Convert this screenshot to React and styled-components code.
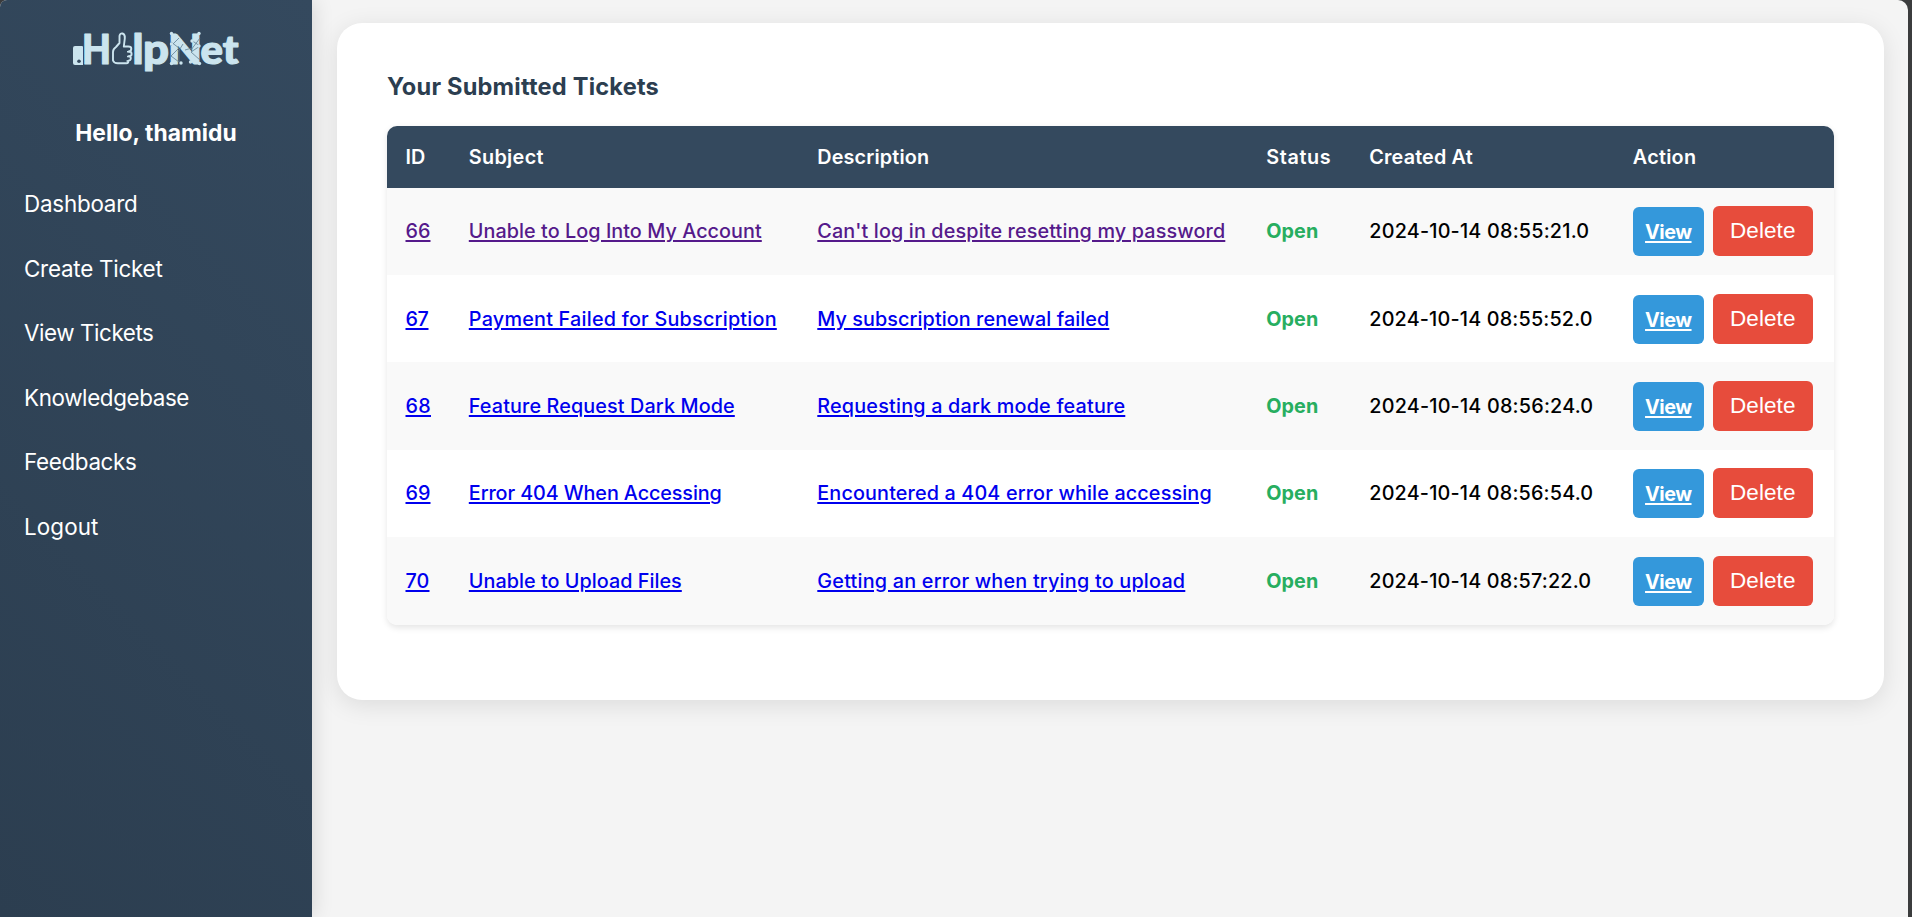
import React, { useLayoutEffect, useRef, useState } from "react";
import styled, { createGlobalStyle, css } from "styled-components";

const Global = createGlobalStyle`
  * { box-sizing: border-box; }
  html, body { margin: 0; padding: 0; background: #3b3c3d; }
  body { font-family: Inter, "Liberation Sans", sans-serif; overflow: hidden; }
`;

const Page = styled.div`
  display: flex;
  width: 1908px;
  height: 917px;
  background: #f4f4f4;
  border-radius: 7px 10px 0 0;
  overflow: hidden;
`;

const Sidebar = styled.aside`
  position: relative;
  z-index: 1;
  flex: 0 0 312px;
  display: flex;
  flex-direction: column;
  background: linear-gradient(225deg, #34495e, #2c3e50);
  box-shadow: 2px 0 19px rgba(0, 0, 0, 0.12);
  color: #fff;
`;

const Logo = styled.svg`
  display: block;
  margin: 10px 0 0 68px;
`;

const Greeting = styled.h2`
  margin: 25px 0 0;
  height: 36px;
  line-height: 36px;
  text-align: center;
  font-size: 22.8px;
  font-weight: 750;
`;

const Nav = styled.nav`
  display: flex;
  flex-direction: column;
  margin-top: 21px;
`;

const NavLink = styled.a`
  height: 64.6px;
  line-height: 64.6px;
  padding-left: 24px;
  font-size: 22.4px;
  color: #fff;
`;

const Main = styled.main`
  flex: 1;
  padding: 23px 24px 0 25px;
`;

const Card = styled.section`
  height: 677px;
  padding: 48px 50px 0;
  background: #fff;
  border-radius: 25px;
  box-shadow: 0 5px 25px rgba(0, 0, 0, 0.1);
`;

const Title = styled.h1`
  margin: 0 0 22.6px;
  height: 32px;
  line-height: 32px;
  font-size: 23.6px;
  font-weight: 650;
  color: #2c3e50;
`;

const Table = styled.div`
  border-radius: 10px;
  overflow: hidden;
  box-shadow: 0 2.5px 6px rgba(0, 0, 0, 0.1);
`;

const columns = css`
  display: grid;
  grid-template-columns: 63.3px 348.5px 449px 103px 263.5px 1fr;
  align-items: center;
`;

const HeadRow = styled.div`
  ${columns}
  height: 62px;
  background: #34495e;
  color: #fff;
  font-size: 19.8px;
  font-weight: 600;
`;

const Row = styled.div`
  ${columns}
  height: 87.4px;
  background: #fff;
  font-size: 19.8px;
  font-weight: 500;
  color: #000;
  &:nth-child(even) { background: #f9f9f9; }
`;

const Cell = styled.div`
  padding-left: 18.5px;
  white-space: nowrap;
`;

const TicketLink = styled.a`
  color: ${(p) => (p.$visited ? "#551a8b" : "#0000ee")};
  text-decoration: underline;
  text-decoration-thickness: 2px;
  text-underline-offset: 2px;
`;

const Status = styled.span`
  color: #27ae60;
  font-weight: 700;
`;

const Actions = styled(Cell)`
  display: flex;
  align-items: flex-end;
  gap: 9px;
`;

const ViewButton = styled.a`
  width: 71px;
  height: 49px;
  line-height: 50px;
  text-align: center;
  border-radius: 6px;
  background: #3498db;
  color: #fff;
  font-weight: 650;
  text-decoration: underline;
  text-decoration-thickness: 2px;
  text-underline-offset: 2px;
`;

const DeleteButton = styled.button`
  width: 100px;
  height: 50px;
  padding: 0;
  border: 0;
  border-radius: 6px;
  background: #e74c3c;
  color: #fff;
  font: 22.5px "Liberation Sans", Arial, sans-serif;
`;

const Fitted = styled.span`
  display: inline-block;
  white-space: nowrap;
  text-decoration: inherit;
`;

/* Tracks its text out or in so that it spans the given width. */
function Fit({ w, children }) {
  const ref = useRef(null);
  const [spacing, setSpacing] = useState(0);
  useLayoutEffect(() => {
    const natural = ref.current.getBoundingClientRect().width;
    setSpacing((w - natural) / children.length);
  }, [w, children]);
  return (
    <Fitted ref={ref} style={{ letterSpacing: spacing }}>
      {children}
    </Fitted>
  );
}

const nav = [
  ["Dashboard", 113.5],
  ["Create Ticket", 138.5],
  ["View Tickets", 129.5],
  ["Knowledgebase", 165],
  ["Feedbacks", 112.5],
  ["Logout", 74.5],
];

const heads = [
  ["ID", 20],
  ["Subject", 75],
  ["Description", 112],
  ["Status", 65],
  ["Created At", 103.5],
  ["Action", 63.5],
];

const tickets = [
  { id: ["66", 25], subject: ["Unable to Log Into My Account", 293], text: ["Can't log in despite resetting my password", 408], at: ["2024-10-14 08:55:21.0", 220], visited: true },
  { id: ["67", 23], subject: ["Payment Failed for Subscription", 308], text: ["My subscription renewal failed", 292], at: ["2024-10-14 08:55:52.0", 223.5] },
  { id: ["68", 25.5], subject: ["Feature Request Dark Mode", 266], text: ["Requesting a dark mode feature", 308], at: ["2024-10-14 08:56:24.0", 224] },
  { id: ["69", 25], subject: ["Error 404 When Accessing", 253], text: ["Encountered a 404 error while accessing", 394.5], at: ["2024-10-14 08:56:54.0", 224] },
  { id: ["70", 24], subject: ["Unable to Upload Files", 213], text: ["Getting an error when trying to upload", 368], at: ["2024-10-14 08:57:22.0", 222] },
];

const meshNodes = [[171.500, 33.500], [199, 33.500], [171.500, 44], [171.500, 63.500], [181, 63], [180.500, 41], [199.500, 63.500], [190.500, 62], [199, 46], [192, 41]];

function HelpNetLogo() {
  return (
    <Logo width="180" height="80" viewBox="68 10 180 80" fill="#cbe4ee">
      <path d="M75 46h7q1 0 1 1v18h-8q-2 0-2-2V48q0-2 2-2z" />
      <circle cx="79" cy="61.3" r="1.8" fill="#34495e" />
      <g fontFamily="Lato, sans-serif" fontWeight="900" stroke="#cbe4ee" strokeWidth="1.2" strokeLinejoin="round">
        <text x="82" y="64" fontSize="41" textLength="29" lengthAdjust="spacingAndGlyphs">H</text>
        <text x="132.5" y="64" fontSize="41" textLength="11" lengthAdjust="spacingAndGlyphs">l</text>
        <text x="143" y="64" fontSize="41" textLength="26" lengthAdjust="spacingAndGlyphs">p</text>
        <text x="168" y="64" fontSize="41" textLength="34" lengthAdjust="spacingAndGlyphs">N</text>
        <text x="200.5" y="64" fontSize="40" textLength="38" lengthAdjust="spacingAndGlyphs">et</text>
      </g>
      <path
        d="M113 60.500V52q0-3 3-5l3.500-4V36q.5-3 3-2.500q2.800 1 2.300 5l-1 8h4.500q3 0 3 2.300t-2.500 2.700q2.800 0 2.800 2.400t-2.800 2.400q2.200 0 2 2.200t-2.500 2.200q.5 2.500-2 2.600h-8.500q-3.800 0-4.800-2.800z"
        fill="none" stroke="#cbe4ee" strokeWidth="1.900" strokeLinejoin="round"
      />
      <path d="M127 51.800h3M127 56.600h3M126.500 60.900h2.500" stroke="#cbe4ee" strokeWidth="1.500" />
      <path
        d="M171 42l8 6-8 8 8 6M179 38l-8 8M179 50v12M183 44l-5 8M191 40l9 6-9 6 9 8M200 38l-9 12M185 50l7-2"
        fill="none" stroke="#5f7f92" strokeWidth=".8"
      />
      {meshNodes.map(([x, y]) => <circle key={`${x}-${y}`} cx={x} cy={y} r="1.700" />)}
    </Logo>
  );
}

export default function App() {
  return (
    <>
      <Global />
      <Page>
        <Sidebar>
          <HelpNetLogo />
          <Greeting><Fit w={161.5}>Hello, thamidu</Fit></Greeting>
          <Nav>
            {nav.map(([label, w]) => (
              <NavLink key={label}><Fit w={w}>{label}</Fit></NavLink>
            ))}
          </Nav>
        </Sidebar>
        <Main>
          <Card>
            <Title><Fit w={272}>Your Submitted Tickets</Fit></Title>
            <Table>
              <HeadRow>
                {heads.map(([label, w]) => (
                  <Cell key={label}><Fit w={w}>{label}</Fit></Cell>
                ))}
              </HeadRow>
              {tickets.map((t) => (
                <Row key={t.id[0]}>
                  {[t.id, t.subject, t.text].map(([label, w]) => (
                    <Cell key={label}>
                      <TicketLink $visited={t.visited}><Fit w={w}>{label}</Fit></TicketLink>
                    </Cell>
                  ))}
                  <Cell><Status><Fit w={52}>Open</Fit></Status></Cell>
                  <Cell><Fit w={t.at[1]}>{t.at[0]}</Fit></Cell>
                  <Actions>
                    <ViewButton><Fit w={46.5}>View</Fit></ViewButton>
                    <DeleteButton><Fit w={65.5}>Delete</Fit></DeleteButton>
                  </Actions>
                </Row>
              ))}
            </Table>
          </Card>
        </Main>
      </Page>
    </>
  );
}
